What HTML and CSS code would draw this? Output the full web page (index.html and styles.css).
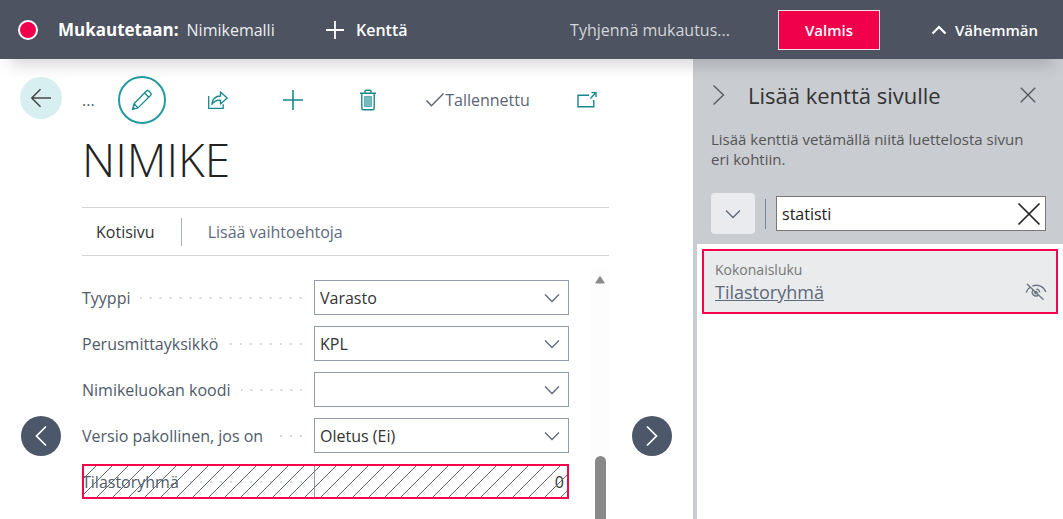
FILE: index.html
```
<!DOCTYPE html>
<html lang="fi">
<head>
<meta charset="utf-8">
<meta name="viewport" content="width=device-width, initial-scale=1">
<title>Nimikemalli</title>
<link rel="stylesheet" href="styles.css">
</head>
<body>
<div class="app">
  <header class="banner">
    <span class="record-dot"></span>
    <p class="banner-title"><strong>Mukautetaan:</strong><span>Nimikemalli</span></p>
    <button class="banner-button add-field" type="button">
      <svg width="18" height="18" viewBox="0 0 18 18"><path d="M9 0v18M0 9h18" stroke="currentColor" stroke-width="1.8" fill="none"/></svg>
      Kenttä
    </button>
    <button class="banner-button clear" type="button">Tyhjennä mukautus...</button>
    <button class="done" type="button">Valmis</button>
    <button class="banner-button less" type="button">
      <svg width="16" height="10" viewBox="0 0 16 10"><path d="M1.5 8.500 8 2l6.500 6.500" stroke="currentColor" stroke-width="2.200" fill="none"/></svg>
      Vähemmän
    </button>
  </header>

  <main class="page">
    <div class="toolbar">
      <button class="back" type="button" aria-label="Takaisin">
        <svg width="22" height="20" viewBox="0 0 22 20"><path d="M21 10H2M10.500 1.300 1.800 10l8.700 8.700" stroke="currentColor" stroke-width="1.500" fill="none"/></svg>
      </button>
      <span class="crumb">...</span>
      <button class="edit" type="button" aria-label="Muokkaa">
        <svg width="22" height="22" viewBox="0 0 22 22" fill="none" stroke="currentColor" stroke-width="1.300" stroke-linejoin="round"><path d="M1.500 20.500 3 14.800 15.200 2.200a2 2 0 0 1 2.800 0l1.500 1.500a2 2 0 0 1 0 2.800L7 18.900ZM3 14.800l4 4.100M13.600 4l4.200 4.200M1.500 20.500l2-2"/></svg>
      </button>
      <div class="tools">
        <button class="tool" type="button" aria-label="Jaa">
          <svg width="22" height="20" viewBox="0 0 22 20" fill="none" stroke="currentColor" stroke-width="1.300" stroke-linejoin="round"><path d="M1.700 6v12.300h14.500v-4"/><path d="M13.500 2v4C8.500 6 5.500 9 4.800 14.300c2.200-3 5-4.300 8.700-4.200v4l6.700-6Z"/></svg>
        </button>
        <button class="tool" type="button" aria-label="Uusi">
          <svg width="22" height="22" viewBox="0 0 22 22"><path d="M11 1v20M1 11h20" stroke="currentColor" stroke-width="1.600" fill="none"/></svg>
        </button>
        <button class="tool" type="button" aria-label="Poista">
          <svg width="18" height="22" viewBox="0 0 18 22" fill="none" stroke="currentColor" stroke-width="1.400"><path d="M1 4.200h16M2.800 4.500v14.700a1.500 1.500 0 0 0 1.500 1.500h9.400a1.500 1.500 0 0 0 1.500-1.500V4.500M6 4V2.600c0-.9.400-1.300 1.200-1.300h3.600c.8 0 1.200.4 1.200 1.300V4"/><path d="M5.500 7.500h7v10h-7z" fill="#76bcbf" stroke="#5fb0b4" stroke-width="1"/></svg>
        </button>
        <span class="saved">
          <svg width="20" height="16" viewBox="0 0 20 16"><path d="m1.500 8.500 5 5.300L18.500 1.500" stroke="currentColor" stroke-width="1.400" fill="none"/></svg>Tallennettu
        </span>
        <button class="tool" type="button" aria-label="Avaa uudessa ikkunassa">
          <svg width="22" height="18" viewBox="0 0 22 18" fill="none" stroke="currentColor" stroke-width="1.400"><path d="M13 4.200H2v11.500h15.800V9M14.500 7.500l5-5.500"/><path d="M15.500 1.600h4.500v4.500"/></svg>
        </button>
      </div>
    </div>

    <h1 class="title">NIMIKE</h1>

    <nav class="tabs">
      <a class="tab current" href="#koti">Kotisivu</a>
      <a class="tab" href="#lisaa">Lisää vaihtoehtoja</a>
    </nav>

    <div class="record">
      <div class="pager">
        <button class="pager-button" type="button" aria-label="Edellinen">
          <svg width="14" height="22" viewBox="0 0 14 22"><path d="M12 1.500 2.500 11l9.500 9.500" stroke="currentColor" stroke-width="1.700" fill="none"/></svg>
        </button>
      </div>

      <form class="fields">
        <div class="field">
          <label for="type">Tyyppi</label><span class="dots"></span>
          <div class="control">
            <select id="type"><option>Varasto</option></select>
            <svg class="chevron" width="16" height="10" viewBox="0 0 16 10"><path d="M1 1.500 8 8.500l7-7"/></svg>
          </div>
        </div>
        <div class="field">
          <label for="unit">Perusmittayksikkö</label><span class="dots"></span>
          <div class="control">
            <input id="unit" type="text" value="KPL">
            <svg class="chevron" width="16" height="10" viewBox="0 0 16 10"><path d="M1 1.500 8 8.500l7-7"/></svg>
          </div>
        </div>
        <div class="field">
          <label for="category">Nimikeluokan koodi</label><span class="dots"></span>
          <div class="control">
            <input id="category" type="text" value="">
            <svg class="chevron" width="16" height="10" viewBox="0 0 16 10"><path d="M1 1.500 8 8.500l7-7"/></svg>
          </div>
        </div>
        <div class="field">
          <label for="variant">Versio pakollinen, jos on</label><span class="dots"></span>
          <div class="control">
            <select id="variant"><option>Oletus (Ei)</option></select>
            <svg class="chevron" width="16" height="10" viewBox="0 0 16 10"><path d="M1 1.500 8 8.500l7-7"/></svg>
          </div>
        </div>
        <div class="field placed">
          <label for="stat">Tilastoryhmä</label><span class="dots"></span>
          <div class="control">
            <input id="stat" type="text" value="0" readonly>
          </div>
          <svg class="hatch" width="100%" height="100%">
            <defs><pattern id="stripes" width="16" height="16" patternUnits="userSpaceOnUse"><path d="M-2 2 2-2M-1 17 17-1M14 18l4-4" stroke="#626873" stroke-width="1"/></pattern></defs>
            <rect width="100%" height="100%" fill="url(#stripes)"/>
          </svg>
        </div>
      </form>

      <div class="scrollbar">
        <svg width="10" height="8" viewBox="0 0 10 8"><path d="M4.200.8a1 1 0 0 1 1.600 0L10 7.500H0Z" fill="#8a8a8a"/></svg>
        <span class="thumb"></span>
      </div>

      <div class="pager">
        <button class="pager-button" type="button" aria-label="Seuraava">
          <svg width="14" height="22" viewBox="0 0 14 22"><path d="M2 1.500 11.500 11 2 20.500" stroke="currentColor" stroke-width="1.700" fill="none"/></svg>
        </button>
      </div>
    </div>
  </main>

  <aside class="panel">
    <div class="panel-top">
      <div class="panel-heading">
        <button class="plain" type="button" aria-label="Piilota">
          <svg width="14" height="22" viewBox="0 0 14 22"><path d="M2.500 1.500 12.500 11l-10 9.500" stroke="currentColor" stroke-width="1.300" fill="none"/></svg>
        </button>
        <h2>Lisää kenttä sivulle</h2>
        <button class="plain" type="button" aria-label="Sulje">
          <svg width="16" height="16" viewBox="0 0 16 16"><path d="m.8.800 14.400 14.400M15.200.8.800 15.200" stroke="currentColor" stroke-width="1.300" fill="none"/></svg>
        </button>
      </div>
      <p class="hint">Lisää kenttiä vetämällä niitä luettelosta sivun eri kohtiin.</p>
      <div class="search-row">
        <button class="filter" type="button" aria-label="Suodata">
          <svg class="filter-icon" width="16" height="10" viewBox="0 0 16 10"><path d="M1 1.500 8 8.500l7-7" fill="none" stroke="#5f6875" stroke-width="1.300"/></svg>
        </button>
        <span class="divider"></span>
        <div class="search">
          <input type="text" value="statisti" aria-label="Etsi">
          <button class="plain clear-search" type="button" aria-label="Tyhjennä">
            <svg width="24" height="24" viewBox="0 0 24 24"><path d="m1.500 1.500 21 21M22.500 1.500l-21 21" stroke="currentColor" stroke-width="1.700" fill="none"/></svg>
          </button>
        </div>
      </div>
    </div>
    <div class="results">
      <div class="result">
        <div class="result-text">
          <span class="result-type">Kokonaisluku</span>
          <a class="result-name" href="#tilastoryhma">Tilastoryhmä</a>
        </div>
        <svg class="hidden-icon" width="22" height="18" viewBox="0 0 22 18" fill="none" stroke="currentColor" stroke-width="1.400"><path d="m2 1 16.500 15.800M1.200 9.500c.8-2.400 2-4 3.800-5.300M7.300 3.100C13.200.9 18.800 3.600 20.800 9"/><path d="M8.200 6.900a3.600 3.600 0 1 0 5.300 5M11.300 6.100c2 .1 3.400 1.500 3.400 3.400"/><circle cx="11" cy="9.600" r="1.200"/></svg>
      </div>
    </div>
  </aside>
</div>
</body>
</html>
```
FILE: styles.css
```
* {
  box-sizing: border-box;
}

body {
  margin: 0;
  background: #fff;
  color: #333;
  font: 16px/20px "Open Sans", "Noto Sans", sans-serif;
}

button,
input,
select {
  font: inherit;
  color: inherit;
  margin: 0;
  padding: 0;
  border: 0;
  background: none;
}

svg {
  display: block;
  flex: none;
}

.app {
  display: grid;
  grid-template: auto 1fr / 1fr 370px;
  min-height: 100vh;
}

/* Customisation banner */
.banner {
  grid-column: 1 / -1;
  position: relative;
  z-index: 1;
  display: flex;
  align-items: center;
  height: 59px;
  padding: 0 25px 0 18px;
  background: #4d5360;
  color: #fff;
  box-shadow: 0 16px 16px -10px rgba(0, 0, 0, 0.16);
}

.record-dot {
  width: 20px;
  height: 20px;
  margin-right: 20px;
  border: 2px solid #fff;
  border-radius: 50%;
  background: #f0004b;
}

.banner-title {
  display: flex;
  align-items: baseline;
  gap: 8px;
  width: 268px;
  margin: 0;
  white-space: nowrap;
}

.banner-title strong {
  font-size: 17px;
  font-weight: 700;
}

.banner-title span {
  color: #eceef0;
}

.banner-button {
  display: flex;
  align-items: center;
  gap: 12px;
  font-weight: 600;
  white-space: nowrap;
}

.clear {
  margin-left: auto;
  color: #d3d6da;
  font-weight: 400;
}

.done {
  width: 102px;
  height: 40px;
  margin: 0 51px 0 48px;
  border: 1px solid #f4dfe6;
  background: #f0004b;
  font-size: 15px;
  font-weight: 600;
}

.less {
  gap: 8px;
  font-size: 15px;
}

/* Record page */
.page {
  display: flex;
  flex-direction: column;
  min-width: 0;
}

.toolbar {
  display: flex;
  align-items: center;
  height: 82px;
  padding: 0 88px 0 20px;
  color: #16898e;
}

.back {
  display: grid;
  place-items: center;
  width: 42px;
  height: 42px;
  margin-bottom: 4px;
  border-radius: 50%;
  background: #d8eff1;
  color: #444;
}

.crumb {
  margin: 0 23px 0 20px;
  color: #555c68;
}

.edit {
  display: grid;
  place-items: center;
  width: 48px;
  height: 48px;
  border: 2px solid #259ba0;
  border-radius: 50%;
}

.tools {
  flex: 1;
  display: flex;
  align-items: center;
  justify-content: space-between;
  margin-left: 34px;
}

.tool {
  display: grid;
  place-items: center;
  width: 36px;
  height: 36px;
}

.saved {
  display: flex;
  align-items: center;
  color: #5b6472;
}

.title {
  margin: 0 0 29px 82px;
  color: #222;
  font-size: 46px;
  font-weight: 300;
  line-height: 37px;
}

.tabs {
  display: flex;
  align-items: center;
  height: 49px;
  margin: 0 84px 0 82px;
  border: solid #d1d3d6;
  border-width: 1px 0;
}

.tab {
  padding: 4px 26px;
  color: #5d6a7c;
  text-decoration: none;
}

.current {
  padding-left: 14px;
  border-right: 1px solid #aab1bb;
  color: #333;
}

.record {
  flex: 1;
  display: grid;
  grid-template-columns: 82px 1fr 63px 61px;
}

.pager {
  padding: 160px 0 0 21px;
}

.pager:last-child {
  padding-left: 0;
}

.pager-button {
  display: grid;
  place-items: center;
  width: 40px;
  height: 40px;
  border-radius: 50%;
  background: #4c586a;
  color: #fff;
}

.fields {
  display: flex;
  flex-direction: column;
  gap: 11px;
  padding-top: 24px;
}

.field {
  position: relative;
  display: grid;
  grid-template-columns: auto 1fr 255px;
  align-items: center;
  height: 35px;
  color: #4f5a6a;
}

.dots {
  height: 2px;
  margin: 0 12px 0 10px;
  background: linear-gradient(90deg, transparent 8px, #d2d4d8 8px) right / 10px 2px repeat-x;
}

.control {
  position: relative;
  height: 35px;
  color: #333;
}

.control select,
.control input {
  display: block;
  width: 100%;
  height: 100%;
  padding: 0 32px 0 5px;
  border: 1px solid #949baa;
  border-radius: 0;
  appearance: none;
  background: #fff;
}

.chevron {
  position: absolute;
  top: 13px;
  right: 9px;
  fill: none;
  stroke: #5f6875;
  stroke-width: 1.3;
  pointer-events: none;
}

.placed .control input {
  padding: 0 5px;
  border-width: 0 0 0 1px;
  text-align: right;
}

.hatch {
  position: absolute;
  inset: 0;
  pointer-events: none;
}

.placed::after {
  content: "";
  position: absolute;
  inset: 0;
  border: 2px solid #f5044b;
  pointer-events: none;
}

.scrollbar {
  display: flex;
  flex-direction: column;
  align-items: center;
  width: 18px;
  margin: 12px 0 0 22px;
  padding-top: 8px;
  background: #fdfdfd;
}

.thumb {
  flex: 1;
  width: 11px;
  margin-top: 172px;
  border-radius: 6px 6px 0 0;
  background: #888;
}

/* Field list panel */
.panel {
  border-left: 4px solid #c9ccd1;
  background: #fff;
}

.panel-top {
  padding: 22px 17px 10px 14px;
  background: #c9ccd1;
}

.panel-heading {
  display: flex;
  align-items: center;
  gap: 23px;
  padding-right: 10px;
  color: #555;
}

.panel-heading h2 {
  flex: 1;
  margin: 0;
  color: #333;
  font-size: 22px;
  font-weight: 400;
  line-height: 28px;
}

.hint {
  margin: 20px 0 24px;
  padding-right: 12px;
  color: #555;
  font-size: 15px;
}

.search-row {
  display: flex;
  align-items: center;
}

.filter {
  display: grid;
  place-items: center;
  width: 44px;
  height: 41px;
  border-radius: 4px;
  background: #e9ebee;
}

.divider {
  width: 1px;
  height: 30px;
  margin: 0 10px;
  background: #7b8491;
}

.search {
  flex: 1;
  display: flex;
  align-items: center;
  height: 35px;
  padding: 0 4px 0 5px;
  border: 1px solid #777;
  background: #fff;
  color: #222;
}

.search input {
  flex: 1;
  min-width: 0;
  outline: 0;
}

.results {
  padding: 5px;
}

.result {
  display: flex;
  align-items: flex-end;
  justify-content: space-between;
  padding: 9px 9px 8px 11px;
  border: 2px solid #f5044b;
  background: #e9ebed;
}

.result-text {
  display: flex;
  flex-direction: column;
}

.result-type {
  color: #777;
  font-size: 14px;
}

.result-name {
  color: #5c697b;
  font-size: 18px;
  line-height: 24px;
}

.hidden-icon {
  margin-bottom: 3px;
  color: #6c7582;
}
```
